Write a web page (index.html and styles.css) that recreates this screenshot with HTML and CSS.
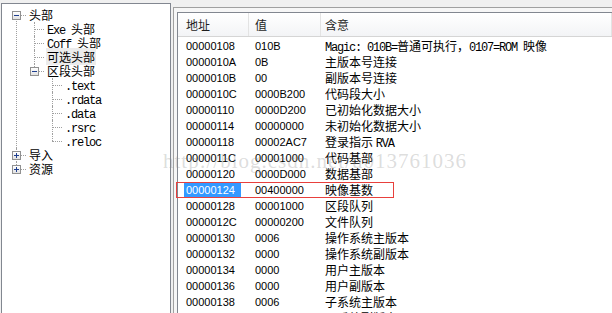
FILE: index.html
```html
<!DOCTYPE html>
<html lang="zh-CN">
<head>
  <meta charset="UTF-8">
  <title>PE 头部</title>
  <link rel="stylesheet" href="styles.css">
</head>
<body>

  <div class="window">
    <div class="tree-pane">
      <ul class="tree">
        <li>
          <span class="toggle minus"></span>
          <span class="item"><span class="label">头部</span></span>
          <ul>
            <li><span class="item"><span class="label"><span class="en">Exe </span>头部</span></span></li>
            <li><span class="item"><span class="label"><span class="en">Coff </span>头部</span></span></li>
            <li><span class="item"><span class="label hot">可选头部</span></span></li>
            <li>
              <span class="toggle minus"></span>
              <span class="item"><span class="label">区段头部</span></span>
              <ul>
                <li><span class="item"><span class="label en">.text</span></span></li>
                <li><span class="item"><span class="label en">.rdata</span></span></li>
                <li><span class="item"><span class="label en">.data</span></span></li>
                <li><span class="item"><span class="label en">.rsrc</span></span></li>
                <li><span class="item"><span class="label en">.reloc</span></span></li>
              </ul>
            </li>
          </ul>
        </li>
        <li>
          <span class="toggle plus"></span>
          <span class="item"><span class="label">导入</span></span>
        </li>
        <li>
          <span class="toggle plus"></span>
          <span class="item"><span class="label">资源</span></span>
        </li>
      </ul>
    </div>

    <div class="list-frame">
      <div class="list">
        <div class="list-head">
          <div class="col c1">地址</div>
          <div class="col c2">值</div>
          <div class="col c3">含意</div>
        </div>
        <div class="list-body">
          <div class="row"><div class="col c1">00000108</div><div class="col c2">010B</div><div class="col c3"><span class="en">Magic: 010B=</span>普通可执行，<span class="en">0107=ROM </span>映像</div></div>
          <div class="row"><div class="col c1">0000010A</div><div class="col c2">0B</div><div class="col c3">主版本号连接</div></div>
          <div class="row"><div class="col c1">0000010B</div><div class="col c2">00</div><div class="col c3">副版本号连接</div></div>
          <div class="row"><div class="col c1">0000010C</div><div class="col c2">0000B200</div><div class="col c3">代码段大小</div></div>
          <div class="row"><div class="col c1">00000110</div><div class="col c2">0000D200</div><div class="col c3">已初始化数据大小</div></div>
          <div class="row"><div class="col c1">00000114</div><div class="col c2">00000000</div><div class="col c3">未初始化数据大小</div></div>
          <div class="row"><div class="col c1">00000118</div><div class="col c2">00002AC7</div><div class="col c3">登录指示 <span class="en">RVA</span></div></div>
          <div class="row"><div class="col c1">0000011C</div><div class="col c2">00001000</div><div class="col c3">代码基部</div></div>
          <div class="row"><div class="col c1">00000120</div><div class="col c2">0000D000</div><div class="col c3">数据基部</div></div>
          <div class="row marked"><div class="col c1"><span class="sel">00000124</span></div><div class="col c2">00400000</div><div class="col c3">映像基数</div></div>
          <div class="row"><div class="col c1">00000128</div><div class="col c2">00001000</div><div class="col c3">区段队列</div></div>
          <div class="row"><div class="col c1">0000012C</div><div class="col c2">00000200</div><div class="col c3">文件队列</div></div>
          <div class="row"><div class="col c1">00000130</div><div class="col c2">0006</div><div class="col c3">操作系统主版本</div></div>
          <div class="row"><div class="col c1">00000132</div><div class="col c2">0000</div><div class="col c3">操作系统副版本</div></div>
          <div class="row"><div class="col c1">00000134</div><div class="col c2">0000</div><div class="col c3">用户主版本</div></div>
          <div class="row"><div class="col c1">00000136</div><div class="col c2">0000</div><div class="col c3">用户副版本</div></div>
          <div class="row"><div class="col c1">00000138</div><div class="col c2">0006</div><div class="col c3">子系统主版本</div></div>
          <div class="row"><div class="col c1">0000013A</div><div class="col c2">0000</div><div class="col c3">子系统副版本</div></div>
        </div>
      </div>
    </div>
  </div>

  <div class="watermark">http://blog.csdn.net/u013761036</div>

</body>
</html>
```

FILE: styles.css
```css
body {
  margin: 0;
  width: 612px;
  height: 313px;
  overflow: hidden;
  background-color: #f0f0f0;
  font-family: "Noto Sans CJK SC", sans-serif;
  font-size: 12px;
  color: #000;
  position: relative;
}
.window {
  display: flex;
  height: 313px;
}
.en {
  font-family: "Liberation Mono", monospace;
  font-size: 12px;
  letter-spacing: -1.2px;
}

/* tree */
.tree-pane {
  box-sizing: border-box;
  width: 170px;
  margin: 3px 0 0 1px;
  border: 1px solid #828790;
  border-bottom: none;
  background-color: #fff;
}
.tree, .tree ul {
  list-style: none;
  margin: 0;
  padding: 0;
}
.tree {
  padding: 4px 0 0 10px;
}
.tree ul {
  padding-left: 18px;
}
.tree li {
  position: relative;
}
.tree li::before {
  content: "";
  position: absolute;
  left: 4px;
  top: 7px;
  width: 10px;
  border-top: 1px dotted #a0a0a0;
}
.tree li::after {
  content: "";
  position: absolute;
  left: 4px;
  top: 0;
  bottom: 0;
  border-left: 1px dotted #a0a0a0;
}
.tree li:last-child::after {
  bottom: auto;
  height: 7px;
}
.tree > li:first-child::after {
  top: 7px;
}
.item {
  display: block;
  height: 14px;
  line-height: 14px;
  padding-left: 16px;
  white-space: nowrap;
}
.label {
  padding: 0 1px;
}
.label.hot {
  background-color: #ececec;
}
.toggle {
  position: absolute;
  left: 0;
  top: 3px;
  z-index: 1;
  box-sizing: border-box;
  width: 9px;
  height: 9px;
  border: 1px solid #919191;
  background: linear-gradient(#fff, #e2e2e2);
}
.toggle::before, .toggle::after {
  content: "";
  position: absolute;
  background-color: #1f3f8f;
}
.toggle::before {
  left: 1px;
  top: 3px;
  width: 5px;
  height: 1px;
}
.toggle.plus::after {
  left: 3px;
  top: 1px;
  width: 1px;
  height: 5px;
}

/* list */
.list-frame {
  flex: 1;
  margin: 7px 0 0 2px;
  padding: 4px 0 0 3px;
  border: 1px solid #a0a0a0;
  border-right: none;
  border-bottom: none;
  background-color: #f6f6f6;
}
.list {
  height: 100%;
  border: 1px solid #828790;
  border-right: none;
  border-bottom: none;
  background-color: #fff;
}
.list-head {
  display: flex;
  height: 23px;
  line-height: 23px;
  border-bottom: 1px solid #d5d5d5;
  background: linear-gradient(#ffffff, #f3f4f6);
  color: #1e1e1e;
}
.list-head .col {
  border-right: 1px solid #e3e3e3;
}
.list-body {
  padding-top: 1px;
}
.row {
  display: flex;
  height: 16px;
  line-height: 16px;
  position: relative;
  white-space: nowrap;
}
.col {
  box-sizing: border-box;
}
.c1 {
  width: 71px;
  padding-left: 8px;
}
.c2 {
  width: 72px;
  padding-left: 6px;
}
.c3 {
  flex: 1;
  padding-left: 4px;
}
.row .c1, .row .c2 {
  font-family: "Liberation Sans", sans-serif;
  font-size: 11px;
}
.sel {
  display: inline-block;
  height: 14px;
  line-height: 14px;
  margin-left: -2px;
  padding: 0 6px 0 2px;
  background-color: #3399ff;
  color: #fff;
}
.row.marked::after {
  content: "";
  position: absolute;
  left: -2px;
  top: 0;
  width: 216px;
  height: 14px;
  border: 1px solid #e8403c;
}

.watermark {
  position: absolute;
  left: 163px;
  top: 151px;
  font-family: "Liberation Serif", serif;
  font-size: 21px;
  line-height: 21px;
  letter-spacing: 1px;
  color: rgba(140, 140, 140, 0.3);
  white-space: nowrap;
  pointer-events: none;
}
```
